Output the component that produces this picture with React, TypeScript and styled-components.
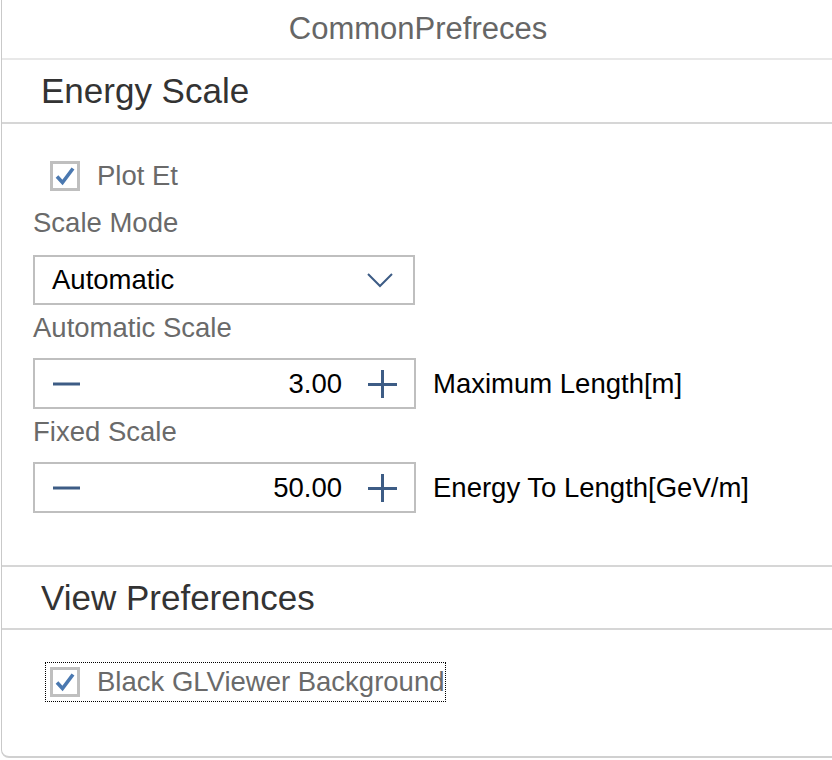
import styled, { createGlobalStyle } from "styled-components";

const GlobalStyle = createGlobalStyle`
  html, body {
    margin: 0;
    padding: 0;
    background: #ffffff;
  }
  body {
    font-family: "Liberation Sans", Arial, sans-serif;
    overflow: hidden;
  }
`;

const colors = {
  title: "#666666",
  heading: "#333333",
  label: "#6a6a6a",
  value: "#000000",
  border: "#bfbfbf",
  line: "#d6d6d6",
  icon: "#3d5c85",
  check: "#4a78b0",
};

const Dialog = styled.div`
  margin-left: 1px;
  width: 840px;
  height: 756px;
  border-left: 1px solid #c9c9c9;
  border-bottom: 2px solid #d0d0d0;
  border-bottom-left-radius: 8px;
  display: flex;
  flex-direction: column;
`;

const Header = styled.div`
  height: 58px;
  display: flex;
  align-items: center;
  justify-content: center;
  padding-right: 8px;
  font-size: 31px;
  color: ${colors.title};
  border-bottom: 2px solid #e8e8e8;
`;

const SectionHeader = styled.div`
  height: 62px;
  display: flex;
  align-items: center;
  padding-left: 39px;
  font-size: 35px;
  color: ${colors.heading};
  border-bottom: 2px solid ${colors.line};
`;

const SectionHeaderNext = styled(SectionHeader)`
  height: 61px;
`;

const SectionBody = styled.div<{ $last?: boolean }>`
  padding: 32px 0 ${(p) => (p.$last ? 0 : 52)}px 31px;
  border-bottom: ${(p) => (p.$last ? "none" : `2px solid ${colors.line}`)};
  display: flex;
  flex-direction: column;
  align-items: flex-start;
`;

const CheckRow = styled.label<{ $focused?: boolean }>`
  height: 38px;
  margin-left: 12px;
  padding: 0 0 0 4px;
  display: flex;
  align-items: center;
  gap: 17px;
  border: 1px ${(p) => (p.$focused ? "dotted #000" : "solid transparent")};
  font-size: 27.5px;
  color: ${colors.label};
`;

const Box = styled.span`
  width: 24px;
  height: 24px;
  border: 3px solid ${colors.border};
  display: flex;
  align-items: center;
  justify-content: center;
`;

const Label = styled.div<{ $top: number; $bottom: number }>`
  margin-top: ${(p) => p.$top}px;
  margin-bottom: ${(p) => p.$bottom}px;
  line-height: 34px;
  font-size: 27.5px;
  color: ${colors.label};
`;

const Select = styled.div`
  box-sizing: border-box;
  width: 382px;
  height: 50px;
  border: 2px solid ${colors.border};
  display: flex;
  align-items: center;
  justify-content: space-between;
  padding: 0 20px 0 17px;
  font-size: 27.5px;
  color: ${colors.value};
`;

const FieldRow = styled.div`
  display: flex;
  align-items: center;
  gap: 17px;
`;

const Stepper = styled.div`
  box-sizing: border-box;
  width: 383px;
  height: 51px;
  border: 2px solid ${colors.border};
  display: flex;
  align-items: center;
  padding: 0 17px 0 18px;
`;

const StepValue = styled.span`
  flex: 1;
  text-align: right;
  padding-right: 26px;
  font-size: 27.5px;
  color: ${colors.value};
`;

const Unit = styled.span`
  font-size: 27.5px;
  color: ${colors.value};
`;

function Check() {
  return (
    <Box>
      <svg width="22" height="22" viewBox="0 0 22 22">
        <path
          d="M3 11.5 L8.5 17.5 L19 3.5"
          fill="none"
          stroke={colors.check}
          strokeWidth="3.6"
          strokeLinejoin="miter"
        />
      </svg>
    </Box>
  );
}

function Chevron() {
  return (
    <svg width="26" height="16" viewBox="0 0 26 16">
      <path d="M1 2 L13 14 L25 2" fill="none" stroke={colors.icon} strokeWidth="2" />
    </svg>
  );
}

function Minus() {
  return (
    <svg width="28" height="28" viewBox="0 0 28 28">
      <path d="M0 14 H27" stroke={colors.icon} strokeWidth="3" />
    </svg>
  );
}

function Plus() {
  return (
    <svg width="29" height="28" viewBox="0 0 29 28">
      <path d="M0 14.5 H29 M14.5 0 V28" stroke={colors.icon} strokeWidth="3" />
    </svg>
  );
}

function StepInput({ value, unit }: { value: string; unit: string }) {
  return (
    <FieldRow>
      <Stepper>
        <Minus />
        <StepValue>{value}</StepValue>
        <Plus />
      </Stepper>
      <Unit>{unit}</Unit>
    </FieldRow>
  );
}

export default function App() {
  return (
    <>
      <GlobalStyle />
      <Dialog>
        <Header>CommonPrefreces</Header>
        <SectionHeader>Energy Scale</SectionHeader>
        <SectionBody>
          <CheckRow>
            <Check />
            Plot Et
          </CheckRow>
          <Label $top={10} $bottom={15}>Scale Mode</Label>
          <Select>
            Automatic
            <Chevron />
          </Select>
          <Label $top={6} $bottom={13}>Automatic Scale</Label>
          <StepInput value="3.00" unit="Maximum Length[m]" />
          <Label $top={6} $bottom={13}>Fixed Scale</Label>
          <StepInput value="50.00" unit="Energy To Length[GeV/m]" />
        </SectionBody>
        <SectionHeaderNext>View Preferences</SectionHeaderNext>
        <SectionBody $last>
          <CheckRow $focused>
            <Check />
            Black GLViewer Background
          </CheckRow>
        </SectionBody>
      </Dialog>
    </>
  );
}
